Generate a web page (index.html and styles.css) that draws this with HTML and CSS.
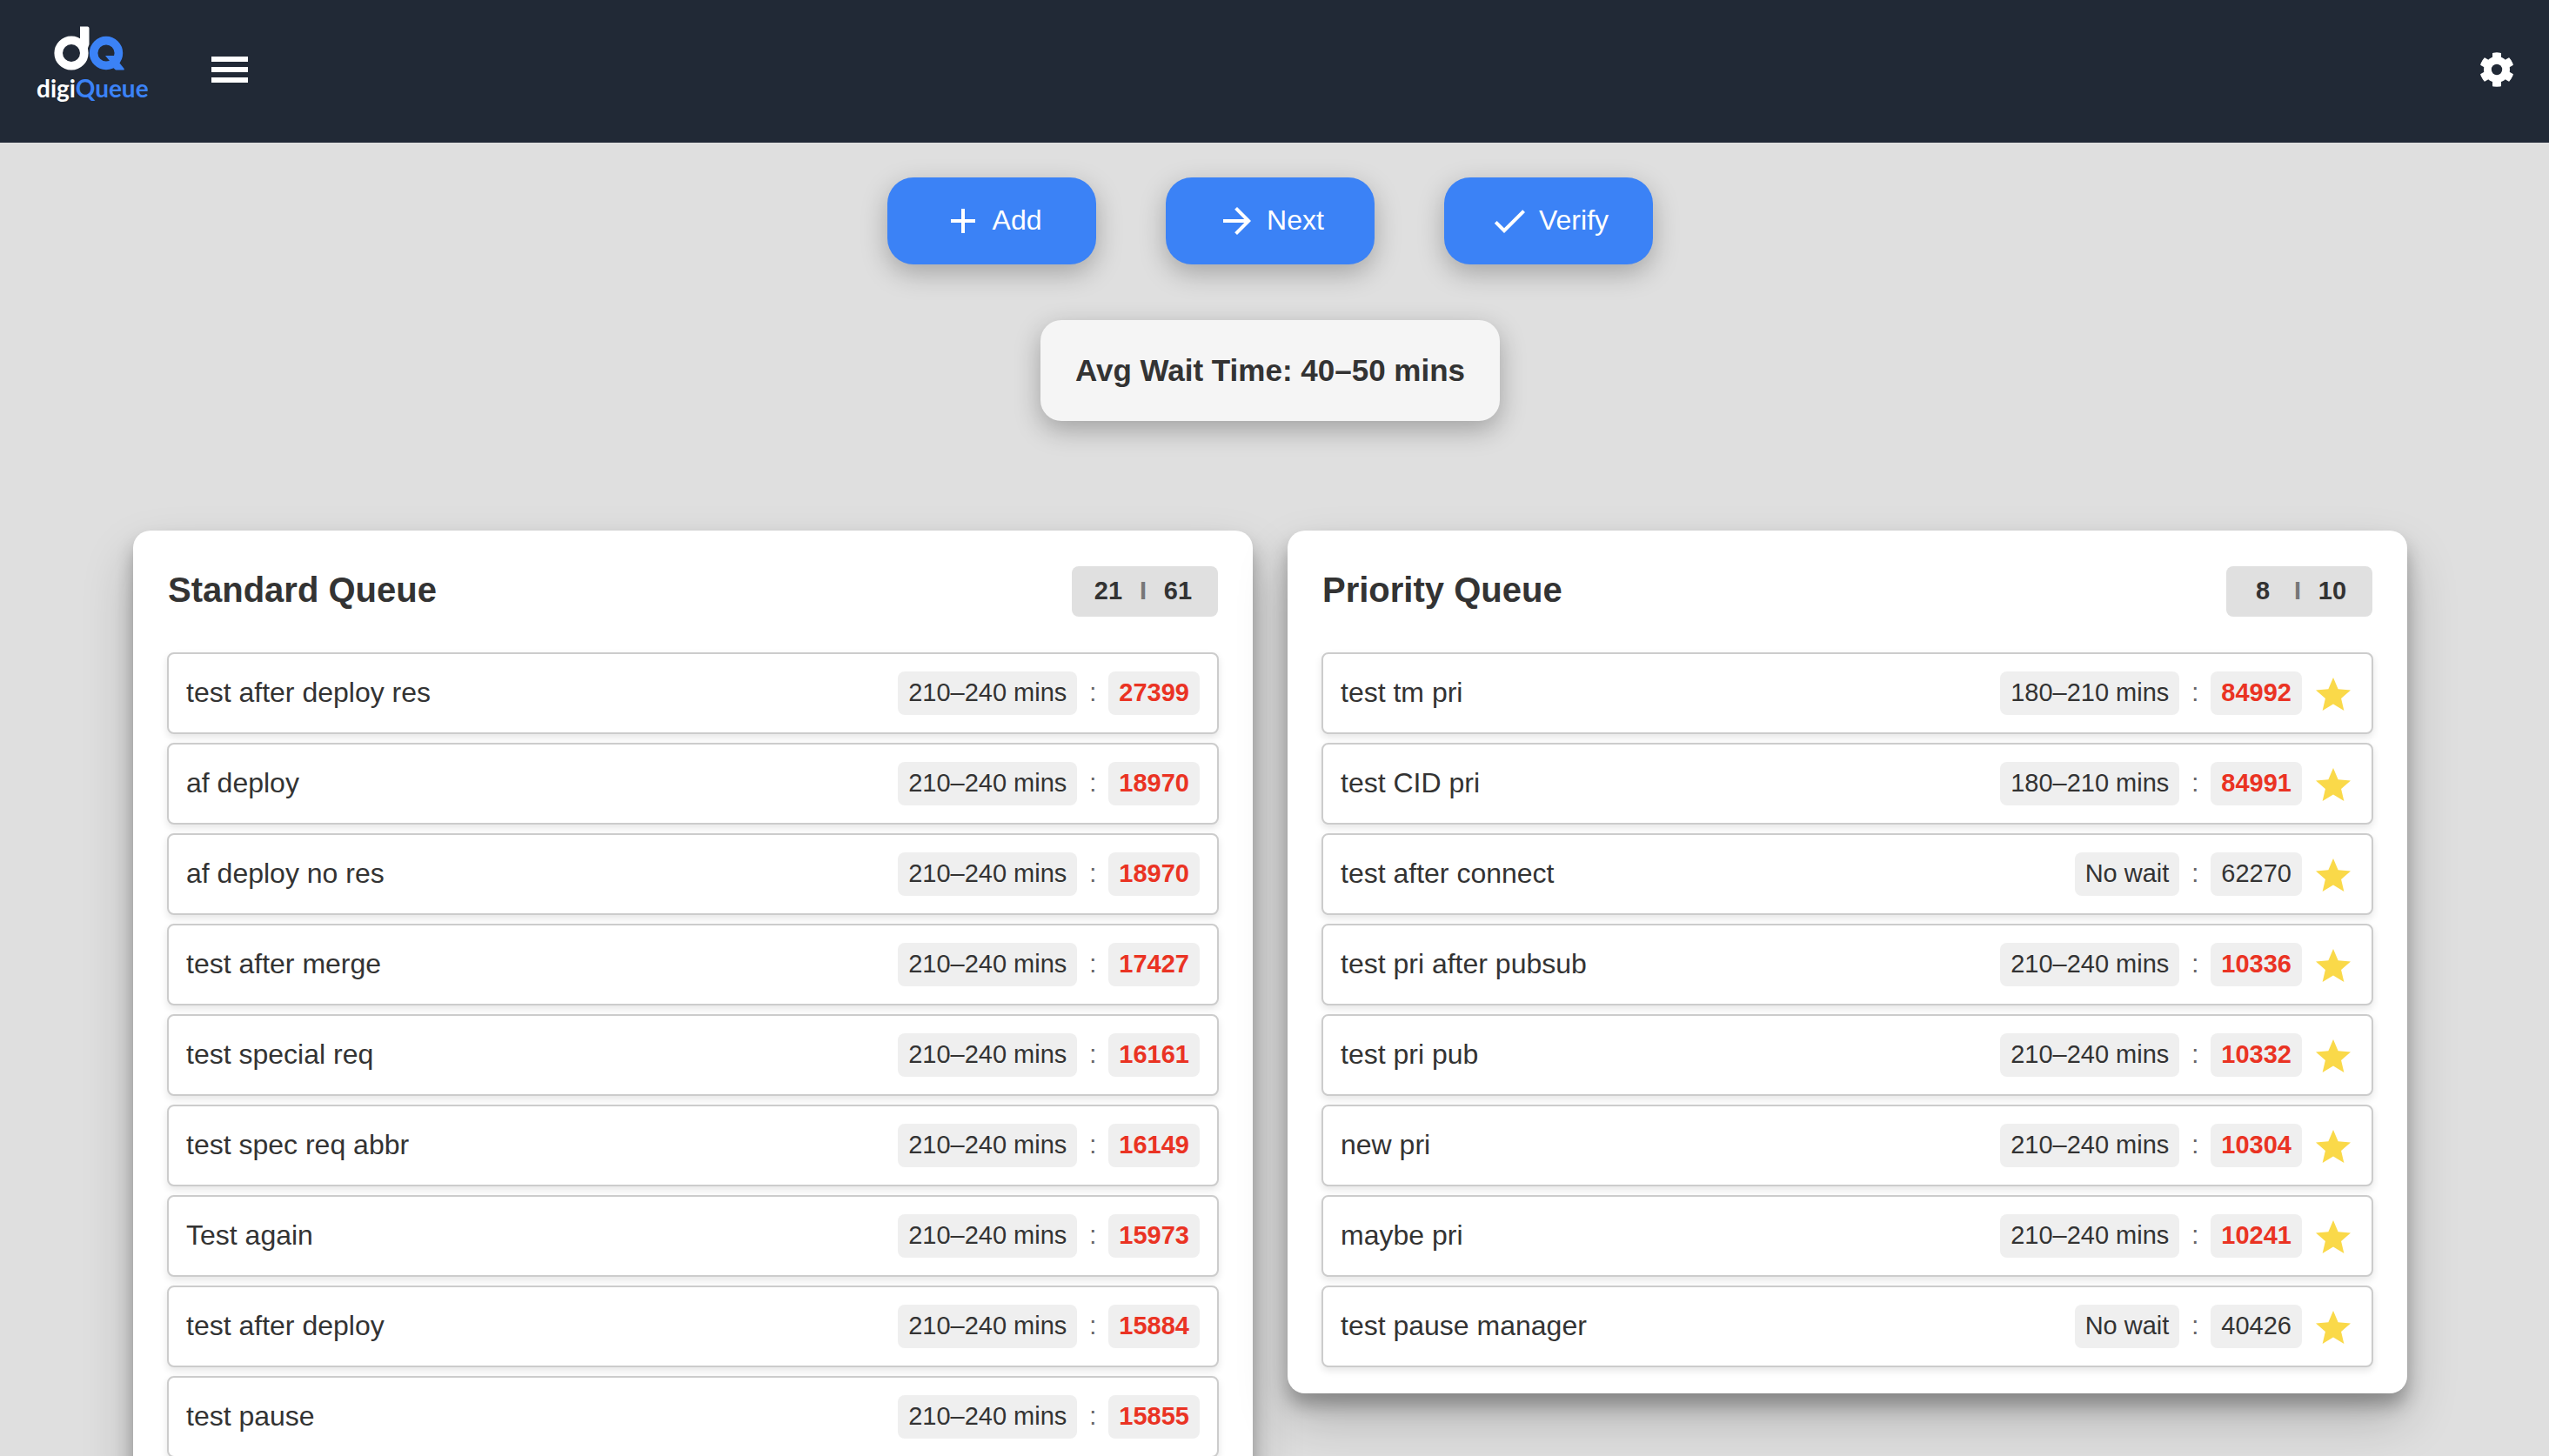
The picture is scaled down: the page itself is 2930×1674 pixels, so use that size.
FILE: index.html
```html
<!DOCTYPE html>
<html lang="en">
<head>
    <meta charset="UTF-8">
    <title>digiQueue</title>
    <meta name="viewport" content="width=device-width, initial-scale=1.0">
    <link rel="stylesheet" href="styles.css">
</head>
<body>
    <svg class="sprite" aria-hidden="true">
        <symbol id="star" viewBox="0 -1 24 24">
            <path d="M12 17.27 18.18 21l-1.64-7.03L22 9.24l-7.19-.61L12 2 9.19 8.63 2 9.24l5.46 4.73L5.82 21z"/>
        </symbol>
    </svg>

    <header class="topbar">
        <a class="logo" href="#" aria-label="digiQueue home">
            <svg class="logo-mark" viewBox="0 0 128 51" aria-hidden="true">
                <circle cx="40" cy="31" r="14.8" fill="none" stroke="#fff" stroke-width="9.6"/>
                <path d="M50 .5h8.5q2 0 2 2V21q-2 4-2 9v6H53l-3-8z" fill="#fff"/>
                <circle cx="80" cy="31" r="14.4" fill="none" stroke="#3b82f6" stroke-width="9.6"/>
                <path d="M79 34h14v6l2.500 2.500 5.200 6.500q.5 1.500-.7 1.500h-9L87 47l-3-7z" fill="#3b82f6"/>
            </svg>
            <span class="logo-text">digi<span>Queue</span></span>
        </a>
        <button class="icon-btn" aria-label="Menu">
            <svg width="42" height="30" viewBox="0 0 42 30"><path d="M0 0h42v6H0zM0 12h42v6H0zM0 24h42v6H0z"/></svg>
        </button>
        <button class="icon-btn settings" aria-label="Settings">
            <svg width="40" height="40" viewBox="-20 -20 40 40">
                <mask id="hole">
                    <circle r="19.7" fill="#fff"/>
                    <circle r="6.2" fill="#000"/>
                </mask>
                <g mask="url(#hole)">
                    <circle r="15"/>
                    <rect x="-5" y="-20" width="10" height="40"/>
                    <rect x="-5" y="-20" width="10" height="40" transform="rotate(60)"/>
                    <rect x="-5" y="-20" width="10" height="40" transform="rotate(120)"/>
                </g>
            </svg>
        </button>
    </header>

    <main>
        <div class="actions">
            <button class="action">
                <svg viewBox="0 0 24 24"><path d="M19 13h-6v6h-2v-6H5v-2h6V5h2v6h6z"/></svg>
                Add
            </button>
            <button class="action">
                <svg viewBox="0 0 24 24"><path d="m12 4-1.41 1.41L16.17 11H4v2h12.17l-5.58 5.59L12 20l8-8z"/></svg>
                Next
            </button>
            <button class="action">
                <svg viewBox="0 0 24 24"><path d="M9 16.17 4.83 12l-1.42 1.41L9 19 21 7l-1.41-1.41z"/></svg>
                Verify
            </button>
        </div>

        <div class="wait-time">Avg Wait Time: 40–50 mins</div>

        <div class="queues">
            <section class="queue">
                <div class="queue-header">
                    <h2>Standard Queue</h2>
                    <div class="count"><b>21</b><span>I</span><b>61</b></div>
                </div>
                <ul class="list">
                    <li><span class="name">test after deploy res</span><span class="chip">210–240 mins</span><span class="sep">:</span><span class="chip late">27399</span></li>
                    <li><span class="name">af deploy</span><span class="chip">210–240 mins</span><span class="sep">:</span><span class="chip late">18970</span></li>
                    <li><span class="name">af deploy no res</span><span class="chip">210–240 mins</span><span class="sep">:</span><span class="chip late">18970</span></li>
                    <li><span class="name">test after merge</span><span class="chip">210–240 mins</span><span class="sep">:</span><span class="chip late">17427</span></li>
                    <li><span class="name">test special req</span><span class="chip">210–240 mins</span><span class="sep">:</span><span class="chip late">16161</span></li>
                    <li><span class="name">test spec req abbr</span><span class="chip">210–240 mins</span><span class="sep">:</span><span class="chip late">16149</span></li>
                    <li><span class="name">Test again</span><span class="chip">210–240 mins</span><span class="sep">:</span><span class="chip late">15973</span></li>
                    <li><span class="name">test after deploy</span><span class="chip">210–240 mins</span><span class="sep">:</span><span class="chip late">15884</span></li>
                    <li><span class="name">test pause</span><span class="chip">210–240 mins</span><span class="sep">:</span><span class="chip late">15855</span></li>
                </ul>
            </section>

            <section class="queue">
                <div class="queue-header">
                    <h2>Priority Queue</h2>
                    <div class="count"><b>8</b><span>I</span><b>10</b></div>
                </div>
                <ul class="list">
                    <li><span class="name">test tm pri</span><span class="chip">180–210 mins</span><span class="sep">:</span><span class="chip late">84992</span><svg class="star"><use href="#star"/></svg></li>
                    <li><span class="name">test CID pri</span><span class="chip">180–210 mins</span><span class="sep">:</span><span class="chip late">84991</span><svg class="star"><use href="#star"/></svg></li>
                    <li><span class="name">test after connect</span><span class="chip">No wait</span><span class="sep">:</span><span class="chip">62270</span><svg class="star"><use href="#star"/></svg></li>
                    <li><span class="name">test pri after pubsub</span><span class="chip">210–240 mins</span><span class="sep">:</span><span class="chip late">10336</span><svg class="star"><use href="#star"/></svg></li>
                    <li><span class="name">test pri pub</span><span class="chip">210–240 mins</span><span class="sep">:</span><span class="chip late">10332</span><svg class="star"><use href="#star"/></svg></li>
                    <li><span class="name">new pri</span><span class="chip">210–240 mins</span><span class="sep">:</span><span class="chip late">10304</span><svg class="star"><use href="#star"/></svg></li>
                    <li><span class="name">maybe pri</span><span class="chip">210–240 mins</span><span class="sep">:</span><span class="chip late">10241</span><svg class="star"><use href="#star"/></svg></li>
                    <li><span class="name">test pause manager</span><span class="chip">No wait</span><span class="sep">:</span><span class="chip">40426</span><svg class="star"><use href="#star"/></svg></li>
                </ul>
            </section>
        </div>
    </main>
</body>
</html>
```
FILE: styles.css
```css
* {
    box-sizing: border-box;
}
html {
    scrollbar-width: none;
}
body {
    margin: 0;
    min-height: 100vh;
    background: #dfdfdf;
    color: #333;
    font-family: "Liberation Sans", Helvetica, Arial, sans-serif;
    font-size: 32px;
}
button {
    border: none;
    font: inherit;
    cursor: pointer;
}
.sprite {
    display: none;
}

/* top bar */
.topbar {
    display: flex;
    align-items: center;
    min-height: 164px;
    padding: 0 40px 4px 42px;
    background: #212936;
}
.logo {
    display: flex;
    flex-direction: column;
    gap: 4px;
    width: 128px;
    margin-right: 73px;
    padding-bottom: 13px;
    color: #fff;
    text-decoration: none;
}
.logo-mark {
    display: block;
    width: 128px;
    height: 51px;
}
.logo-text {
    font-family: Lato, sans-serif;
    font-size: 28px;
    font-weight: 700;
    line-height: 32px;
    white-space: nowrap;
}
.logo-text span {
    color: #3b82f6;
}
.icon-btn {
    display: flex;
    padding: 0;
    background: none;
    fill: #fff;
}
.settings {
    margin-left: auto;
}

main {
    display: flex;
    flex-direction: column;
    align-items: center;
    padding: 40px 163px 80px 153px;
}

/* actions */
.actions {
    display: flex;
    gap: 80px;
}
.action {
    display: flex;
    align-items: center;
    justify-content: center;
    gap: 10px;
    width: 240px;
    height: 100px;
    padding: 0 0 1px;
    border-radius: 30px;
    background: #3b82f6;
    color: #fff;
    box-shadow: 0 10px 30px rgba(0, 0, 0, 0.26);
}
.action svg {
    width: 48px;
    height: 48px;
    fill: #fff;
}
.wait-time {
    margin-top: 64px;
    padding: 36px 40px;
    border-radius: 24px;
    background: #f5f5f5;
    font-size: 35px;
    font-weight: bold;
    line-height: 44px;
    box-shadow: 0 10px 30px rgba(0, 0, 0, 0.28);
}

/* queues */
.queues {
    display: grid;
    grid-template-columns: 1fr 1fr;
    align-items: start;
    gap: 40px;
    width: 100%;
    margin-top: 126px;
}
.queue {
    padding: 40px 39px 30px;
    border-radius: 20px;
    background: #fff;
    box-shadow: 0 14px 20px rgba(0, 0, 0, 0.27), 0 30px 60px rgba(0, 0, 0, 0.2);
}
.queue-header {
    display: flex;
    align-items: center;
    justify-content: space-between;
    height: 60px;
    margin-bottom: 40px;
    padding: 0 1px;
}
.queue-header h2 {
    margin: 0;
    padding-bottom: 4px;
    font-size: 40px;
    line-height: 44px;
}
.count {
    display: flex;
    padding: 11px 24px 13px 20px;
    border-radius: 8px;
    background: #e0e0e0;
    font-size: 29px;
    font-weight: bold;
    line-height: 34px;
    text-align: center;
}
.count b {
    width: 44px;
}
.count span {
    width: 36px;
    color: #777;
}
.list {
    display: flex;
    flex-direction: column;
    gap: 10px;
    margin: 0;
    padding: 0;
    list-style: none;
}
.list li {
    display: flex;
    align-items: center;
    height: 94px;
    padding: 0 20px;
    border: 2px solid #ccc;
    border-radius: 8px;
    background: #fff;
    box-shadow: 0 4px 8px rgba(0, 0, 0, 0.1);
}
.name {
    flex: 1;
    padding-bottom: 2px;
}
.chip {
    padding: 7px 12px 9px;
    border-radius: 8px;
    background: #efefef;
    font-size: 29px;
    line-height: 34px;
}
.late {
    color: #ea3323;
    font-weight: bold;
}
.sep {
    width: 36px;
    padding-bottom: 2px;
    color: #666;
    font-size: 29px;
    text-align: center;
}
.star {
    width: 48px;
    height: 48px;
    margin-left: 12px;
    fill: #fad949;
}
```
